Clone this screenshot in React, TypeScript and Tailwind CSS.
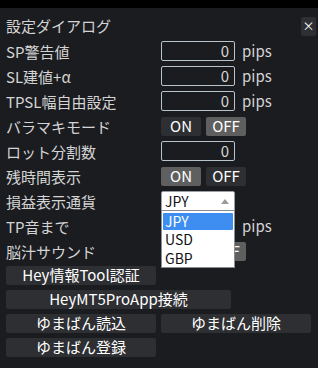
import React from "react";

const font = { fontFamily: '"Noto Sans CJK JP", "Noto Sans", sans-serif' };

function NumInput() {
  return (
    <div className="w-[74px] h-[20px] border border-[#b9c3cc] rounded-[2px] flex items-center justify-end pr-[5px] text-[15px] text-[#d6d6d6]">
      0
    </div>
  );
}

function Toggle({ on }: { on: boolean }) {
  return (
    <div className="flex gap-[5px]">
      <div
        className={`w-[40px] h-[19px] rounded-[2px] flex items-center justify-center text-[15px] text-white ${
          on ? "bg-[#5f5f5f]" : "bg-[#2e2f33]"
        }`}
      >
        ON
      </div>
      <div
        className={`w-[40px] h-[19px] rounded-[2px] flex items-center justify-center text-[15px] text-white ${
          on ? "bg-[#2e2f33]" : "bg-[#5f5f5f]"
        }`}
      >
        OFF
      </div>
    </div>
  );
}

function Row({ label, children }: { label: string; children?: React.ReactNode }) {
  return (
    <div className="flex items-center h-[20px]">
      <div className="w-[155px] text-[15px] text-[#d4d4d4] leading-none whitespace-nowrap">{label}</div>
      {children}
    </div>
  );
}

function Pips() {
  return <span className="ml-[7px] text-[15px] text-[#d4d4d4]">pips</span>;
}

function Btn({ label, w }: { label: string; w: string }) {
  return (
    <div className={`${w} h-[19px] bg-[#2e2f33] rounded-[2px] flex items-center justify-center text-[15px] text-white whitespace-nowrap`}>
      {label}
    </div>
  );
}

export default function App() {
  return (
    <div className="w-[318px] h-[368px] bg-[#1b1c20] overflow-hidden" style={font}>
      <div className="h-[8px] bg-black" />
      <div className="px-[6px] pt-[8px] flex flex-col gap-[5px]">
        <div className="flex items-center justify-between h-[20px]">
          <span className="text-[15px] text-[#d4d4d4]">設定ダイアログ</span>
          <div className="w-[15px] h-[19px] bg-[#2e2f33] rounded-[2px] flex items-center justify-center text-[12px] text-white mr-[-4px]">
            ×
          </div>
        </div>
        <Row label="SP警告値">
          <NumInput />
          <Pips />
        </Row>
        <Row label="SL建値+α">
          <NumInput />
          <Pips />
        </Row>
        <Row label="TPSL幅自由設定">
          <NumInput />
          <Pips />
        </Row>
        <Row label="バラマキモード">
          <Toggle on={false} />
        </Row>
        <Row label="ロット分割数">
          <NumInput />
        </Row>
        <Row label="残時間表示">
          <Toggle on={true} />
        </Row>
        <Row label="損益表示通貨">
          <div className="relative">
            <div className="w-[74px] h-[20px] bg-white border border-[#9aa0a6] rounded-t-[2px] flex items-center justify-between pl-[3px] pr-[5px] text-[14px] text-[#111]">
              <span>JPY</span>
              <svg width="8" height="5" viewBox="0 0 8 5">
                <path d="M0 5 L4 0 L8 5 Z" fill="#9a9a9a" />
              </svg>
            </div>
            <div className="absolute left-0 top-[19px] w-[74px] h-[58px] bg-white border border-[#8a8f95] z-10 px-[1px] pt-[2px] flex flex-col text-[14px] text-[#111]">
              <div className="h-[17px] bg-[#3d8ef0] text-white flex items-center pl-[2px] rounded-[1px]">JPY</div>
              <div className="h-[19px] flex items-center pl-[2px]">USD</div>
              <div className="h-[18px] flex items-center pl-[2px]">GBP</div>
            </div>
          </div>
        </Row>
        <Row label="TP音まで">
          <NumInput />
          <Pips />
        </Row>
        <Row label="脳汁サウンド">
          <Toggle on={false} />
        </Row>
        <Btn label="Hey情報Tool認証" w="w-[150px]" />
        <Btn label="HeyMT5ProApp接続" w="w-[225px]" />
        <div className="flex gap-[5px]">
          <Btn label="ゆまばん読込" w="w-[150px]" />
          <Btn label="ゆまばん削除" w="w-[150px]" />
        </div>
        <Btn label="ゆまばん登録" w="w-[150px]" />
      </div>
    </div>
  );
}
